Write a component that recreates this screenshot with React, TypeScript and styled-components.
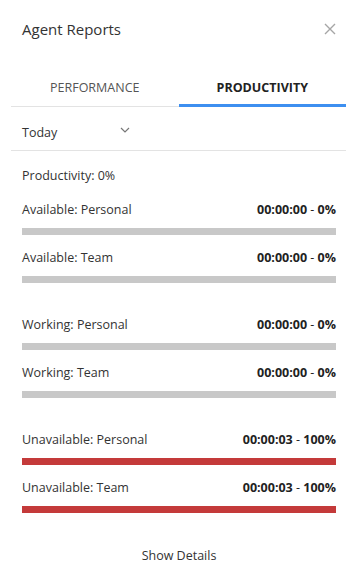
import React, { useState } from 'react'
import styled, { createGlobalStyle } from 'styled-components'

const GlobalStyle = createGlobalStyle`
    body {
        margin: 0;
        background: white;
        font-family: "Open Sans", "Noto Sans", "Liberation Sans", sans-serif;
        color: #333;
    }
`

type Stat = { label: string; value: string; percent: number }

const groups: { color: string; items: Stat[] }[] = [
    {
        color: '#c8c8c8',
        items: [
            { label: 'Available: Personal', value: '00:00:00', percent: 0 },
            { label: 'Available: Team', value: '00:00:00', percent: 0 },
        ],
    },
    {
        color: '#c8c8c8',
        items: [
            { label: 'Working: Personal', value: '00:00:00', percent: 0 },
            { label: 'Working: Team', value: '00:00:00', percent: 0 },
        ],
    },
    {
        color: '#c43a3a',
        items: [
            { label: 'Unavailable: Personal', value: '00:00:03', percent: 100 },
            { label: 'Unavailable: Team', value: '00:00:03', percent: 100 },
        ],
    },
]

function App() {
    const [tab, setTab] = useState<'performance' | 'productivity'>('productivity')
    return (
        <Panel>
            <GlobalStyle />
            <Header>
                <Title>Agent Reports</Title>
                <Close aria-label="Close">
                    <svg width="12" height="12" viewBox="0 0 12 12">
                        <path d="M1 1 L11 11 M11 1 L1 11" stroke="#a6a6a6" strokeWidth="1.4" fill="none" />
                    </svg>
                </Close>
            </Header>
            <Tabs>
                <Tab active={tab === 'performance'} onClick={() => setTab('performance')}>PERFORMANCE</Tab>
                <Tab active={tab === 'productivity'} onClick={() => setTab('productivity')}>PRODUCTIVITY</Tab>
            </Tabs>
            <Filter>
                <span>Today</span>
                <svg width="10" height="6" viewBox="0 0 10 6">
                    <path d="M1 1 L5 5 L9 1" stroke="#777" strokeWidth="1.2" fill="none" />
                </svg>
            </Filter>
            <Body>
                <Summary>Productivity: 0%</Summary>
                {groups.map((g, gi) => (
                    <Group key={gi}>
                        {g.items.map(s => (
                            <Row key={s.label}>
                                <RowHead>
                                    <span>{s.label}</span>
                                    <Value>{s.value} <Dash>-</Dash> {s.percent}%</Value>
                                </RowHead>
                                <Track>
                                    <Fill color={g.color} style={{ width: (s.percent === 0 ? 100 : s.percent) + '%' }} />
                                </Track>
                            </Row>
                        ))}
                    </Group>
                ))}
                <Details>Show Details</Details>
            </Body>
        </Panel>
    )
}

const Panel = styled.div`
    width: 348px;
    height: 588px;
    padding: 0 2px 0 11px;
    box-sizing: border-box;
    display: flex;
    flex-direction: column;
`

const Header = styled.div`
    display: flex;
    justify-content: space-between;
    align-items: center;
    padding: 18px 10px 0 11px;
    height: 22px;
`

const Title = styled.div`
    font-size: 15px;
    color: #333;
`

const Close = styled.button`
    border: none;
    background: none;
    padding: 0;
    display: flex;
    cursor: pointer;
`

const Tabs = styled.div`
    display: flex;
    margin-top: 30px;
    border-bottom: 1px solid #e3e3e3;
`

const Tab = styled.div<{ active: boolean }>`
    flex: 1;
    text-align: center;
    font-size: 12.5px;
    height: 34px;
    line-height: 35px;
    color: ${p => (p.active ? '#222' : '#555')};
    font-weight: ${p => (p.active ? 700 : 400)};
    border-bottom: 3px solid ${p => (p.active ? '#3d8ff0' : 'transparent')};
    margin-bottom: -1px;
    cursor: pointer;
`

const Filter = styled.div`
    display: flex;
    align-items: center;
    height: 44px;
    padding: 8px 0 0 11px;
    box-sizing: border-box;
    font-size: 12.5px;
    border-bottom: 1px solid #e3e3e3;
    > span {
        width: 98px;
    }
    > svg {
        margin-top: -6px;
    }
`

const Body = styled.div`
    display: flex;
    flex-direction: column;
    padding: 16px 10px 0 11px;
    font-size: 12.5px;
`

const Summary = styled.div`
    line-height: 18px;
    margin-bottom: 16px;
`

const Group = styled.div`
    display: flex;
    flex-direction: column;
    margin-bottom: 19px;
`

const Row = styled.div`
    display: flex;
    flex-direction: column;
    margin-bottom: 14px;
`

const RowHead = styled.div`
    display: flex;
    justify-content: space-between;
    line-height: 18px;
`

const Value = styled.span`
    font-weight: 700;
    color: #222;
`

const Dash = styled.span`
    font-weight: 400;
`

const Track = styled.div`
    margin-top: 9px;
    height: 7px;
    background: #c8c8c8;
`

const Fill = styled.div<{ color: string }>`
    height: 100%;
    background: ${p => p.color};
`

const Details = styled.div`
    text-align: center;
    margin-top: 1px;
    line-height: 18px;
`

export default App
